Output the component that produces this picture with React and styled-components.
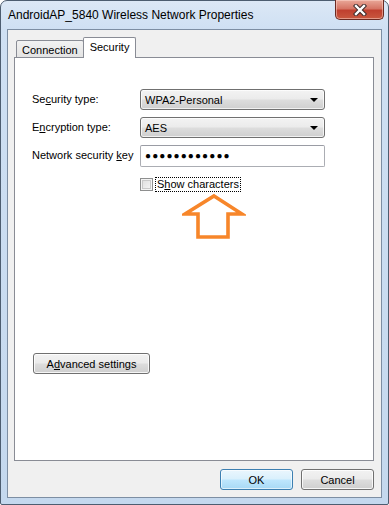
import React, {useState} from 'react';
import styled, {createGlobalStyle} from 'styled-components';

const GlobalStyle = createGlobalStyle`
  html, body {
    margin: 0;
    padding: 0;
    background: #ffffff;
  }
  body {
    font-family: "Liberation Sans", Arial, sans-serif;
    font-size: 11px;
    color: #000000;
  }
`;

const Window = styled.div`
  position: relative;
  box-sizing: border-box;
  width: 389px;
  height: 505px;
  border: 1px solid #4d5d70;
  border-radius: 7px 7px 2px 2px;
  background: linear-gradient(#dce8f6 0px, #cfe0f3 28px, #c4d8ee 100%);
  display: flex;
  flex-direction: column;
`;

const TitleBar = styled.div`
  height: 28px;
  display: flex;
  align-items: flex-start;
  justify-content: space-between;
  padding-left: 7px;
`;

const Title = styled.span`
  line-height: 28px;
  font-size: 12px;
  color: #000;
`;

const CloseButton = styled.button`
  margin: -1px 4px 0 0;
  width: 49px;
  height: 20px;
  padding: 0;
  border: 1px solid #6b2a22;
  border-top: none;
  border-radius: 0 0 5px 5px;
  background: linear-gradient(#e9a899 0%, #d67565 45%, #c0402f 55%, #c9583f 100%);
  box-shadow: inset 0 0 0 1px rgba(255, 220, 210, 0.5);
  display: flex;
  align-items: center;
  justify-content: center;
`;

const Client = styled.div`
  flex: 1;
  margin: 0 6px 6px 6px;
  border: 1px solid #7d8ea3;
  background: #f0f0f0;
  display: flex;
  flex-direction: column;
  padding: 7px 7px 0 6px;
`;

const TabStrip = styled.div`
  display: flex;
  align-items: flex-end;
  padding-left: 2px;
  position: relative;
  z-index: 1;
  margin-bottom: -1px;
`;

const Tab = styled.div`
  box-sizing: border-box;
  height: ${p => (p.$active ? '21px' : '18px')};
  padding: ${p => (p.$active ? '3px 6px 0 6px' : '3px 5px 0 5px')};
  border: 1px solid #898c95;
  border-bottom: ${p => (p.$active ? 'none' : '1px solid #898c95')};
  margin-left: ${p => (p.$active ? '-1px' : '0')};
  background: ${p => (p.$active ? '#ffffff' : 'linear-gradient(#f2f2f2, #e3e3e3)')};
  border-radius: 2px 2px 0 0;
  line-height: 13px;
  white-space: nowrap;
`;

const Panel = styled.div`
  position: relative;
  flex: 1;
  background: #ffffff;
  border: 1px solid #898c95;
  padding: 31px 0 0 17px;
  display: flex;
  flex-direction: column;
  align-items: flex-start;
`;

const Form = styled.div`
  display: grid;
  grid-template-columns: 108px 185px;
  grid-auto-rows: 21px;
  row-gap: 7px;
  align-items: center;
`;

const Label = styled.label`
  line-height: 21px;
  white-space: nowrap;
`;

const Key = styled.span`
  text-decoration: underline;
`;

const Combo = styled.div`
  box-sizing: border-box;
  height: 21px;
  border: 1px solid #707070;
  border-radius: 3px;
  background: linear-gradient(#f3f3f3 0%, #ebebeb 48%, #dddddd 52%, #cfcfcf 100%);
  box-shadow: inset 0 0 0 1px rgba(255, 255, 255, 0.7);
  display: flex;
  align-items: center;
  justify-content: space-between;
  padding: 0 6px 0 4px;
`;

const Caret = styled.span`
  width: 0;
  height: 0;
  border-left: 4px solid transparent;
  border-right: 4px solid transparent;
  border-top: 4px solid #000;
`;

const KeyInput = styled.div`
  box-sizing: border-box;
  height: 22px;
  border: 1px solid #abadb3;
  border-top-color: #9a9ca4;
  border-radius: 2px;
  background: #fff;
  display: flex;
  align-items: center;
  padding-left: 4px;
  font-family: "Liberation Sans", Arial, sans-serif;
  font-size: 10px;
  letter-spacing: 1.1px;
`;

const CheckRow = styled.div`
  display: flex;
  align-items: center;
  margin: 11px 0 0 108px;
  gap: 2px;
`;

const CheckBox = styled.span`
  box-sizing: border-box;
  width: 13px;
  height: 13px;
  border: 1px solid #8e8f8f;
  background: linear-gradient(135deg, #dcdcdc, #f8f8f8);
  box-shadow: inset 0 0 0 1px #f4f4f4, inset 0 0 0 2px #c9c9c9;
`;

const CheckLabel = styled.span`
  border: 1px dotted #000;
  padding: 0 1px;
  line-height: 13px;
`;

const Arrow = styled.svg`
  position: absolute;
  left: 167px;
  top: 135px;
`;

const Button = styled.button`
  box-sizing: border-box;
  height: 21px;
  width: ${p => p.$width || '73px'};
  padding: 0;
  font-family: "Liberation Sans", Arial, sans-serif;
  font-size: 11px;
  color: #000;
  border: 1px solid ${p => (p.$default ? '#3c7fb1' : '#707070')};
  border-radius: 3px;
  background: ${p =>
    p.$default
      ? 'linear-gradient(#eaf6fd 0%, #d9f0fc 48%, #bee6fd 52%, #a7d9f5 100%)'
      : 'linear-gradient(#f2f2f2 0%, #ebebeb 48%, #dddddd 52%, #cfcfcf 100%)'};
  box-shadow: inset 0 0 0 1px ${p => (p.$default ? 'rgba(255,255,255,0.6)' : 'rgba(255,255,255,0.8)')};
`;

const AdvancedButton = styled(Button)`
  margin-top: 161px;
  margin-left: 1px;
`;

const Footer = styled.div`
  display: flex;
  justify-content: flex-end;
  gap: 8px;
  padding: 8px 0 7px 0;
`;

const CloseGlyph = () => (
  <svg width="14" height="12" viewBox="0 0 14 12">
    <path d="M3 2 L11 10 M11 2 L3 10" stroke="#3b2a2a" strokeWidth="4.4" strokeLinecap="square" />
    <path d="M3 2 L11 10 M11 2 L3 10" stroke="#ffffff" strokeWidth="2.4" strokeLinecap="square" />
  </svg>
);

export default function App() {
  const [tab, setTab] = useState('security');

  return (
    <>
      <GlobalStyle />
      <Window>
        <TitleBar>
          <Title>AndroidAP_5840 Wireless Network Properties</Title>
          <CloseButton aria-label="Close">
            <CloseGlyph />
          </CloseButton>
        </TitleBar>
        <Client>
          <TabStrip>
            <Tab $active={tab === 'connection'} onClick={() => setTab('connection')}>Connection</Tab>
            <Tab $active={tab === 'security'} onClick={() => setTab('security')}>Security</Tab>
          </TabStrip>
          <Panel>
            <Form>
              <Label>Se<Key>c</Key>urity type:</Label>
              <Combo>
                <span>WPA2-Personal</span>
                <Caret />
              </Combo>
              <Label>E<Key>n</Key>cryption type:</Label>
              <Combo>
                <span>AES</span>
                <Caret />
              </Combo>
              <Label>Network security <Key>k</Key>ey</Label>
              <KeyInput>●●●●●●●●●●●●</KeyInput>
            </Form>
            <CheckRow>
              <CheckBox />
              <CheckLabel>S<Key>h</Key>ow characters</CheckLabel>
            </CheckRow>
            <Arrow width="64" height="47" viewBox="0 0 64 47">
              <polygon
                points="32,3 60,21 46,21 46,44 16,44 16,21 3,21"
                fill="none"
                stroke="#f7862a"
                strokeWidth="3.6"
                strokeLinejoin="miter"
              />
            </Arrow>
            <AdvancedButton $width="117px">A<Key>d</Key>vanced settings</AdvancedButton>
          </Panel>
          <Footer>
            <Button $default>OK</Button>
            <Button>Cancel</Button>
          </Footer>
        </Client>
      </Window>
    </>
  );
}
